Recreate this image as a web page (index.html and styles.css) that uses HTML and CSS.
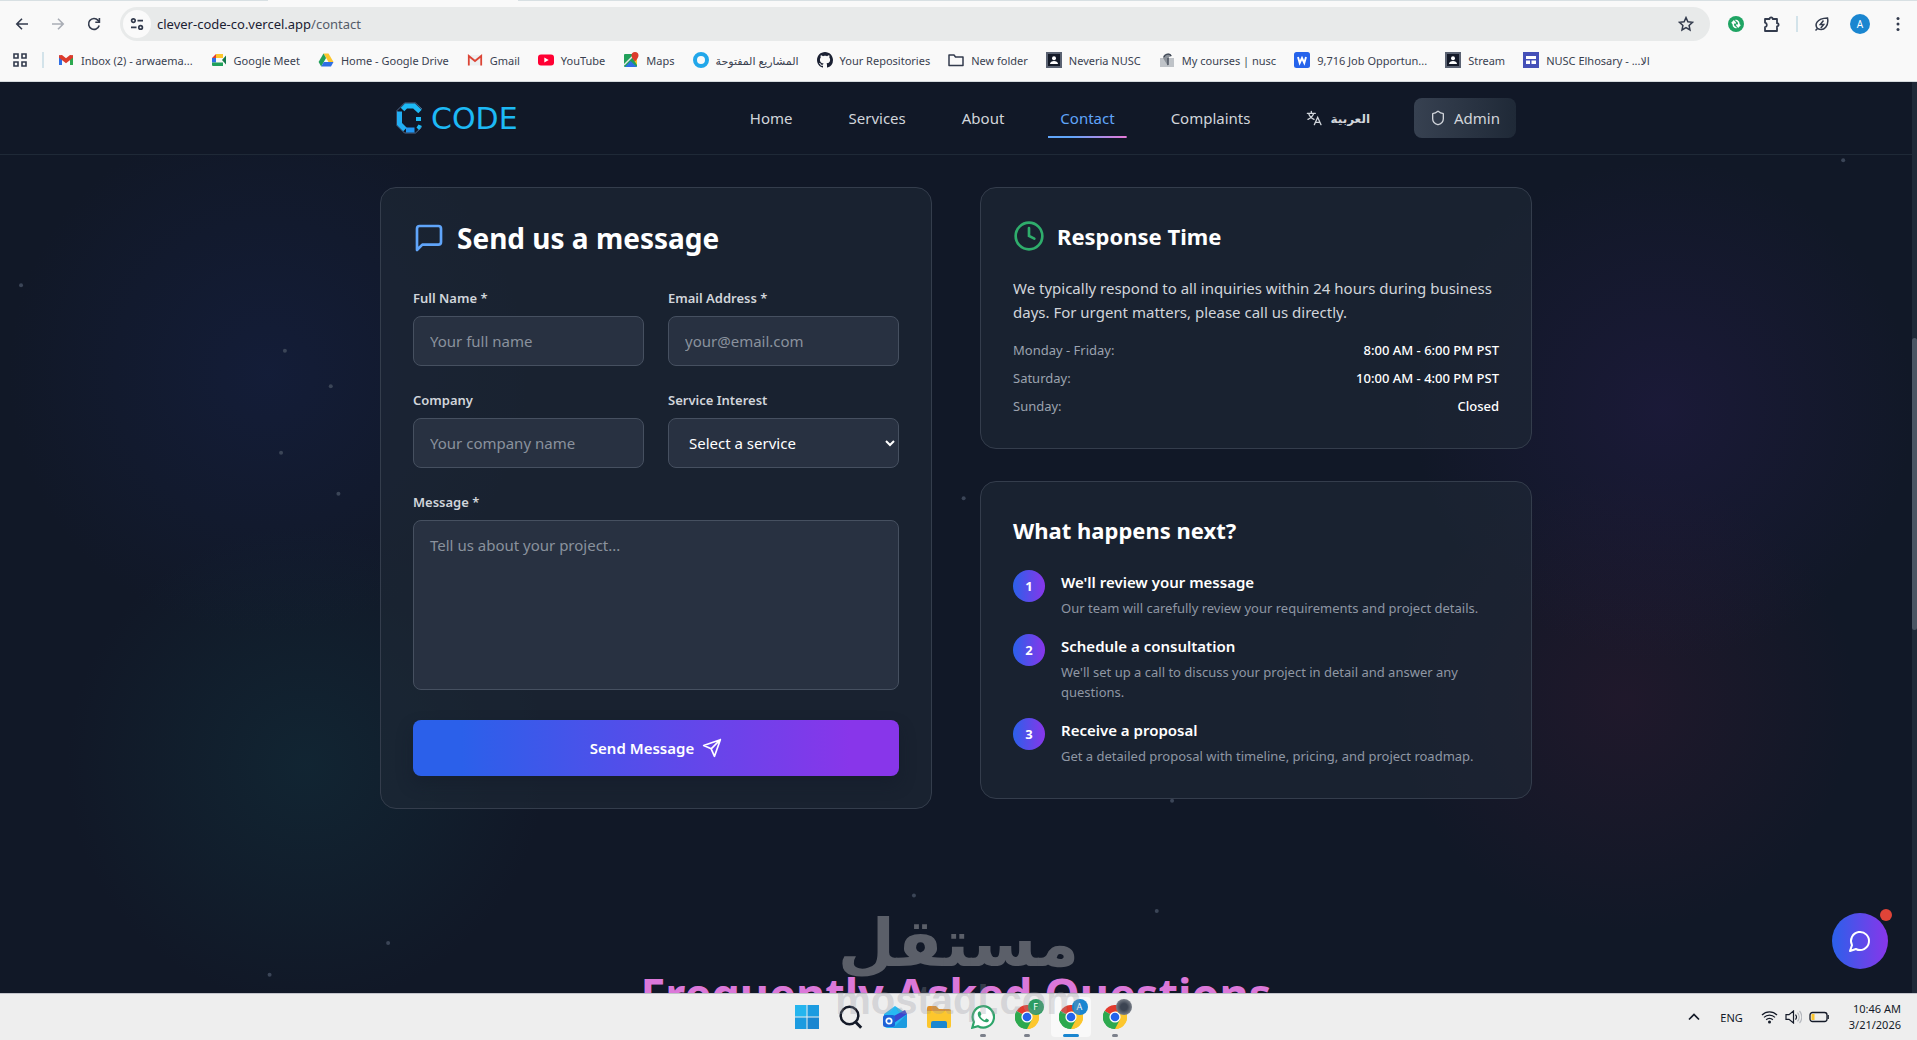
FILE: index.html
```
<!DOCTYPE html>
<html lang="en">
<head>
    <meta charset="UTF-8">
    <meta name="viewport" content="width=device-width, initial-scale=1.0">
    <title>Contact - Clever Code</title>
    <link rel="stylesheet" href="styles.css">
</head>
<body>

<!-- shared icons -->
<svg class="defs" width="0" height="0" aria-hidden="true">
    <symbol id="person" viewBox="0 0 16 16">
        <rect width="16" height="16" fill="#5a6272"/>
        <rect x="2" y="2" width="12" height="12" fill="#141a28"/>
        <circle cx="8" cy="6.3" r="2" fill="#fff"/>
        <path d="M4 12c0-2 2-3 4-3s4 1 4 3z" fill="#fff"/>
    </symbol>
    <symbol id="chrome" viewBox="0 0 24 24">
        <path d="M12 12 1.6 6A12 12 0 0 1 22.4 6z" fill="#e33b2e"/>
        <path d="M12 12 22.4 6A12 12 0 0 1 12 24z" fill="#fcc62d"/>
        <path d="M12 12v12A12 12 0 0 1 1.6 6z" fill="#2da94f"/>
        <path d="M12 6.5h10.7A12 12 0 0 1 12 24l4.8-9.2z" fill="#fcc62d"/>
        <path d="M7.2 14.8 1.6 6A12 12 0 0 0 12 24l4.8-9.2z" fill="#2da94f"/>
        <circle cx="12" cy="12" r="5.6" fill="#fff"/>
        <circle cx="12" cy="12" r="4.3" fill="#2563eb"/>
    </symbol>
</svg>

<div class="window">
    <div class="browser">
        <div class="tab-strip"><span></span><span></span></div>
        <div class="toolbar">
            <button class="tool" aria-label="Back"><svg width="16" height="16" viewBox="0 0 16 16" fill="none" stroke="#333b4d" stroke-width="1.6"><path d="M14 8H3M8 2.8 2.8 8 8 13.200"/></svg></button>
            <button class="tool" aria-label="Forward"><svg width="16" height="16" viewBox="0 0 16 16" fill="none" stroke="#a9adb5" stroke-width="1.6"><path d="M2 8h11M8 2.800 13.200 8 8 13.200"/></svg></button>
            <button class="tool" aria-label="Reload"><svg width="16" height="16" viewBox="0 0 16 16" fill="none" stroke="#333b4d" stroke-width="1.6"><path d="M13.2 9.500A5.400 5.400 0 1 1 12.100 4.400L13.200 5.600"/><path d="M13.400 2v4.200H9.300"/></svg></button>
            <div class="omnibox">
                <button class="site-info" aria-label="Site information"><svg width="14" height="14" viewBox="0 0 14 14" fill="none" stroke="#333b4d" stroke-width="1.7"><circle cx="3.4" cy="3.6" r="1.8"/><path d="M7.5 3.6H13M1 10.4h5.5"/><circle cx="10.6" cy="10.4" r="1.8"/></svg></button>
                <div class="url">clever-code-co.vercel.app<span>/contact</span></div>
                <button class="tool star" aria-label="Bookmark"><svg width="16" height="16" viewBox="0 0 16 16" fill="none" stroke="#333b4d" stroke-width="1.5"><path d="m8 1.6 1.9 4.2 4.6.5-3.4 3.1.9 4.6L8 11.7 4 14l.9-4.6L1.500 6.300l4.600-.5z"/></svg></button>
            </div>
            <div class="extensions">
                <button class="tool" aria-label="Extension"><svg width="16" height="16" viewBox="0 0 16 16"><circle cx="8" cy="8" r="8" fill="#1fa463"/><g fill="none" stroke="#fff" stroke-width="1.6"><path d="M8.500 11.800C5.500 11.500 4.600 9 5.600 6.500M3.800 7.400l2-2.200 1.800 2.300M7.500 4.200c3 .3 3.900 2.800 2.900 5.300M12.200 8.600l-2 2.200-1.800-2.300"/></g></svg></button>
                <button class="tool" aria-label="Extensions"><svg width="18" height="18" viewBox="0 0 18 18" fill="none" stroke="#333b4d" stroke-width="1.8" stroke-linejoin="round"><path d="M2 4h4.500a1.600 1.600 0 0 1 3.200 0H14v4.200a1.600 1.600 0 0 1 0 3.200V16H2v-3.800a2.300 2.300 0 0 0 0-4.500z"/></svg></button>
                <span class="divider"></span>
                <button class="tool" aria-label="Energy saver"><svg width="16" height="16" viewBox="0 0 16 16" fill="none" stroke="#333b4d" stroke-width="1.5"><path d="M1.500 14.500 3.500 12.500M3.500 12.500C.5 9 2 2.500 13.500 2 15 9 10.500 16 3.500 12.500z"/><path d="M9.500 4.500 6.300 8.400h3.400L6.800 12"/></svg></button>
                <button class="avatar" aria-label="Profile">A</button>
                <button class="tool menu" aria-label="Menu"><svg width="4" height="16" viewBox="0 0 4 16" fill="#333b4d"><circle cx="2" cy="2.500" r="1.500"/><circle cx="2" cy="8" r="1.500"/><circle cx="2" cy="13.500" r="1.500"/></svg></button>
            </div>
        </div>
        <nav class="bookmarks" aria-label="Bookmarks">
            <button class="tool" aria-label="Apps"><svg width="14" height="14" viewBox="0 0 14 14" fill="none" stroke="#333b4d" stroke-width="1.600"><path d="M1 1h4v4H1zM9 1h4v4H9zM1 9h4v4H1zM9 9h4v4H9z"/></svg></button>
            <span class="divider"></span>
            <a href="#"><svg viewBox="0 0 16 16"><path d="M1 3v10h3V6.500z" fill="#2f6fe4"/><path d="M15 3v10h-3V6.500z" fill="#2da94f"/><path d="M1 3.200 4 3l4 3.300L12 3l3 .2v2.600l-7 5.400-7-5.400z" fill="#dc3b2c"/></svg>Inbox (2) - arwaema...</a>
            <a href="#"><svg viewBox="0 0 16 16"><path d="M1 6l4-4v4z" fill="#e33b2e"/><path d="M5 2h7v4H5z" fill="#fcc62d"/><path d="M1 6h4v4.500H1z" fill="#2f6fe4"/><path d="M1 10.500h4V14H2a1 1 0 0 1-1-1zM5 10.500h7V14H5z" fill="#21a05a"/><path d="m11 8 4-4.500v9z" fill="#16794b"/></svg>Google Meet</a>
            <a href="#"><svg viewBox="0 0 16 16"><path d="M5.500 1.500h5l5 8.500h-5z" fill="#fcc62d"/><path d="m5.500 1.500 2.600 4.400L3.200 14.500.6 10z" fill="#21a05a"/><path d="M5.800 10h9.700L13 14.500H3.200z" fill="#2f6fe4"/></svg>Home - Google Drive</a>
            <a href="#"><svg viewBox="0 0 16 16"><path d="M1 3h14v10.500H1z" fill="#eef0f1"/><path d="M1.800 13.500V4L8 9l6.200-5v9.500" fill="none" stroke="#dc4536" stroke-width="1.800"/></svg>Gmail</a>
            <a href="#"><svg viewBox="0 0 16 16"><rect y="2.500" width="16" height="11" rx="3" fill="#ff0033"/><path d="m6.300 5.500 4.400 2.500-4.400 2.500z" fill="#fff"/></svg>YouTube</a>
            <a href="#"><svg viewBox="0 0 16 16"><rect x="1" y="2" width="13" height="13" rx="1" fill="#21a05a"/><path d="m2 15 5.500-6L14 15z" fill="#2f6fe4"/><path d="M1 13 11 3" stroke="#e8eaea" stroke-width="1.500"/><path d="M9 5 14 13V7z" fill="#fcc62d"/><path d="M12 0a3.500 3.500 0 0 1 3.500 3.500C15.500 6 12 9.500 12 9.500S8.500 6 8.500 3.500A3.500 3.500 0 0 1 12 0z" fill="#dc3b2c"/></svg>Maps</a>
            <a href="#"><svg viewBox="0 0 16 16"><circle cx="8" cy="8" r="6" fill="none" stroke="#22a7ea" stroke-width="4"/></svg><bdi lang="ar">المشاريع المفتوحة</bdi></a>
            <a href="#"><svg viewBox="0 0 16 16"><path fill="#1b2133" d="M8 0C3.580 0 0 3.580 0 8c0 3.540 2.290 6.530 5.470 7.590.4.070.55-.17.55-.38 0-.19-.01-.82-.01-1.490-2.010.37-2.530-.49-2.690-.94-.09-.23-.48-.94-.82-1.130-.28-.15-.68-.52-.01-.53.63-.01 1.080.58 1.230.82.72 1.210 1.870.87 2.330.66.07-.52.28-.87.51-1.070-1.780-.2-3.640-.89-3.640-3.950 0-.87.31-1.590.82-2.150-.08-.2-.36-1.020.08-2.120 0 0 .67-.21 2.200.82.64-.18 1.320-.27 2-.27s1.360.09 2 .27c1.530-1.040 2.200-.82 2.200-.82.44 1.100.16 1.920.08 2.120.51.56.82 1.270.82 2.150 0 3.070-1.870 3.750-3.650 3.950.29.25.54.73.54 1.480 0 1.070-.01 1.930-.01 2.200 0 .21.15.46.55.38A8.010 8.010 0 0 0 16 8c0-4.420-3.580-8-8-8z"/></svg>Your Repositories</a>
            <a href="#"><svg viewBox="0 0 16 16" fill="none" stroke="#333b4d" stroke-width="1.500"><path d="M1 3h5l1.500 2H15v8.500H1z" stroke-linejoin="round"/></svg>New folder</a>
            <a href="#"><svg><use href="#person"/></svg>Neveria NUSC</a>
            <a href="#"><svg viewBox="0 0 16 16"><path d="M1 6h14v9H1z" fill="#bfc3c8"/><path d="M4 6c0-5 7-6 9-2l-3 1-1 9" fill="#8b9199"/><path d="M5 5c1-3 6-4 7-1M9 6v7" stroke="#3c4452" stroke-width="1.200" fill="none"/></svg>My courses | nusc</a>
            <a href="#"><svg viewBox="0 0 16 16"><rect width="16" height="16" rx="2.500" fill="#2563eb"/><path d="m4 5 1.700 6L8 6l2.300 5L12 5" fill="none" stroke="#fff" stroke-width="1.900"/></svg>9,716 Job Opportun...</a>
            <a href="#"><svg><use href="#person"/></svg>Stream</a>
            <a href="#"><svg viewBox="0 0 16 16"><path d="M0 0h16v16H0z" fill="#4550b8"/><path d="M3 4h10v3H3zM3 8.500h4V12H3zM8.500 8.500H13V12H8.500z" fill="#fff"/></svg><span>NUSC Elhosary - ...<bdi lang="ar">الا</bdi></span></a>
        </nav>
    </div>

    <div class="viewport">
        <div class="page">
            <svg class="particles" width="100%" height="100%" fill="#3b4557" aria-hidden="true">
                <circle cx="1.100%" cy="22.300%" r="2"/>
                <circle cx="14.900%" cy="29.500%" r="2"/>
                <circle cx="17.300%" cy="33.400%" r="2"/>
                <circle cx="14.700%" cy="40.700%" r="2"/>
                <circle cx="17.700%" cy="45.200%" r="2"/>
                <circle cx="50.400%" cy="45.700%" r="2"/>
                <circle cx="61.300%" cy="78.900%" r="2"/>
                <circle cx="47.800%" cy="89.300%" r="2"/>
                <circle cx="60.500%" cy="91%" r="2"/>
                <circle cx="20.300%" cy="94.500%" r="2"/>
                <circle cx="14.100%" cy="98%" r="2"/>
                <circle cx="96.400%" cy="8.600%" r="2"/>
            </svg>

            <header class="site-header">
                <div class="container">
                    <a class="logo" href="#" aria-label="Clever Code">
                        <svg width="27" height="32" viewBox="0 0 27 32" fill="none">
                            <path d="M26 7 19.500 1H8.500L1 8.500v15L8.500 31h11l6-5.500" stroke="#51698c" stroke-width="1"/>
                            <path d="M24 9.500 18 4H10L6.500 7.500" stroke="#1db9f5" stroke-width="5"/>
                            <path d="M3.500 9.500v12.500l5.500 5.500" stroke="#22aef3" stroke-width="5"/>
                            <path d="M10 28h8.500" stroke="#2196f3" stroke-width="5"/>
                            <path d="M20 15h5v4h-5zM20.500 25.500l2-3 3.500 1.500-3 4z" fill="#1db9f5"/>
                        </svg>
                        <span>CODE</span>
                    </a>
                    <nav class="menu-links">
                        <a href="#">Home</a>
                        <a href="#">Services</a>
                        <a href="#">About</a>
                        <a href="#" class="active">Contact</a>
                        <a href="#">Complaints</a>
                        <button class="lang">
                            <svg width="16" height="16" viewBox="0 0 24 24" fill="none" stroke="currentColor" stroke-width="2" stroke-linecap="round"><path d="M2 5h12M8 2v3M4 5c1 4 4 7 8 9M11.500 5C10.500 9 7 12 3 14M12.500 22l5-11 5 11M14.200 18.500h6.600"/></svg>
                            <bdi lang="ar">العربية</bdi>
                        </button>
                        <button class="admin">
                            <svg width="16" height="16" viewBox="0 0 24 24" fill="none" stroke="currentColor" stroke-width="2" stroke-linejoin="round"><path d="M20 13c0 5-3.500 7.500-7.660 8.950a1 1 0 0 1-.67-.01C7.500 20.500 4 18 4 13V6a1 1 0 0 1 1-1c2 0 4.500-1.200 6.240-2.720a1.170 1.170 0 0 1 1.520 0C14.510 3.810 17 5 19 5a1 1 0 0 1 1 1z"/></svg>
                            Admin
                        </button>
                    </nav>
                </div>
            </header>

            <main class="contact">
                <section class="card form-card">
                    <h2>
                        <svg width="32" height="32" viewBox="0 0 24 24" fill="none" stroke="#60a5fa" stroke-width="2" stroke-linejoin="round"><path d="M21 15a2 2 0 0 1-2 2H7l-4 4V5a2 2 0 0 1 2-2h14a2 2 0 0 1 2 2z"/></svg>
                        Send us a message
                    </h2>
                    <form>
                        <div class="fields">
                            <div class="field">
                                <label for="name">Full Name *</label>
                                <input id="name" type="text" placeholder="Your full name">
                            </div>
                            <div class="field">
                                <label for="email">Email Address *</label>
                                <input id="email" type="email" placeholder="your@email.com">
                            </div>
                            <div class="field">
                                <label for="company">Company</label>
                                <input id="company" type="text" placeholder="Your company name">
                            </div>
                            <div class="field">
                                <label for="service">Service Interest</label>
                                <select id="service">
                                    <option>Select a service</option>
                                </select>
                            </div>
                        </div>
                        <div class="field">
                            <label for="message">Message *</label>
                            <textarea id="message" placeholder="Tell us about your project..."></textarea>
                        </div>
                        <button type="button" class="send">
                            Send Message
                            <svg width="20" height="20" viewBox="0 0 24 24" fill="none" stroke="currentColor" stroke-width="2" stroke-linejoin="round" stroke-linecap="round"><path d="M22 2 15 22l-4-9-9-4zM22 2 11 13"/></svg>
                        </button>
                    </form>
                </section>

                <div class="side">
                    <section class="card">
                        <h3>
                            <svg width="32" height="32" viewBox="0 0 24 24" fill="none" stroke="#2fae6c" stroke-width="2" stroke-linecap="round"><circle cx="12" cy="12" r="10"/><path d="M12 6v6l4 2"/></svg>
                            Response Time
                        </h3>
                        <p class="intro">We typically respond to all inquiries within 24 hours during business days. For urgent matters, please call us directly.</p>
                        <dl class="hours">
                            <div><dt>Monday - Friday:</dt><dd>8:00 AM - 6:00 PM PST</dd></div>
                            <div><dt>Saturday:</dt><dd>10:00 AM - 4:00 PM PST</dd></div>
                            <div><dt>Sunday:</dt><dd>Closed</dd></div>
                        </dl>
                    </section>
                    <section class="card">
                        <h3>What happens next?</h3>
                        <ol class="steps">
                            <li>
                                <span class="num">1</span>
                                <div>
                                    <h4>We'll review your message</h4>
                                    <p>Our team will carefully review your requirements and project details.</p>
                                </div>
                            </li>
                            <li>
                                <span class="num">2</span>
                                <div>
                                    <h4>Schedule a consultation</h4>
                                    <p>We'll set up a call to discuss your project in detail and answer any questions.</p>
                                </div>
                            </li>
                            <li>
                                <span class="num">3</span>
                                <div>
                                    <h4>Receive a proposal</h4>
                                    <p>Get a detailed proposal with timeline, pricing, and project roadmap.</p>
                                </div>
                            </li>
                        </ol>
                    </section>
                </div>
            </main>

            <h2 class="faq-title">Frequently Asked Questions</h2>

            <button class="chat" aria-label="Open chat">
                <svg width="24" height="24" viewBox="0 0 24 24" fill="none" stroke="#fff" stroke-width="2" stroke-linejoin="round"><path d="M7.900 20A9 9 0 1 0 4 16.100L2 22z"/></svg>
                <span></span>
            </button>
        </div>
        <div class="scrollbar"><span></span></div>
    </div>

    <footer class="taskbar">
        <div class="apps">
            <button aria-label="Start"><svg viewBox="0 0 24 24"><path d="M0 0h11.500v11.500H0z" fill="#25b5ee"/><path d="M12.500 0H24v11.500H12.500zM0 12.500h11.500V24H0z" fill="#1c9be0"/><path d="M12.500 12.500H24V24H12.500z" fill="#1a86d0"/></svg></button>
            <button aria-label="Search"><svg viewBox="0 0 24 24" fill="none" stroke="#141a28" stroke-width="2.500"><circle cx="10.500" cy="10.500" r="8.800"/><path d="m16.800 17.300 5.400 5.400" stroke-width="3"/></svg></button>
            <button aria-label="Outlook"><svg viewBox="0 0 24 24"><path d="M1 9 12 1l12 8v12a2 2 0 0 1-2 2H5a4 4 0 0 1-4-4z" fill="#27b9f2"/><path d="M24 9v12a2 2 0 0 1-2 2H10z" fill="#1c9be0"/><path d="m9 12 13-7 2 4-13 9z" fill="#3b46cf"/><rect y="10" width="12" height="12" rx="2.500" fill="#1d62d8"/><circle cx="6" cy="16" r="2.700" fill="none" stroke="#fff" stroke-width="1.700"/></svg></button>
            <button aria-label="File Explorer"><svg viewBox="0 0 24 24"><path d="M0 3a2 2 0 0 1 2-2h7l3 3h10a2 2 0 0 1 2 2v6H0z" fill="#e0912b"/><path d="M0 6h24v15a2 2 0 0 1-2 2H2a2 2 0 0 1-2-2z" fill="#fcc62d"/><path d="M4 23v-5a2 2 0 0 1 2-2h12a2 2 0 0 1 2 2v5z" fill="#1a86d0"/></svg></button>
            <button aria-label="WhatsApp" class="open"><svg viewBox="0 0 24 24"><path d="M1.300 22.700 2.900 17A10.700 10.700 0 1 1 7 21.200z" fill="#fff" stroke="#2da56a" stroke-width="2.200"/><path d="M8.500 6.300c-2.800 1-2 5 1 8s7 4.200 8.300 1.700c.5-1-.3-1.500-2.600-2.500l-1.400 1.700c-2-.7-3.700-2.300-4.500-4.300l1.100-1.500c-.5-2-1-3-1.900-3.100z" fill="#2da56a"/></svg></button>
            <button aria-label="Chrome profile F" class="open"><svg><use href="#chrome"/></svg><span class="badge green">F</span></button>
            <button aria-label="Chrome profile A" class="open current"><svg><use href="#chrome"/></svg><span class="badge">A</span></button>
            <button aria-label="Chrome" class="open"><svg><use href="#chrome"/></svg><span class="badge photo"></span></button>
        </div>
        <div class="tray">
            <svg width="12" height="8" viewBox="0 0 12 8" fill="none" stroke="#141a28" stroke-width="1.700"><path d="m1 6.500 5-5 5 5"/></svg>
            <span class="input-lang">ENG</span>
            <div class="status">
                <svg width="17" height="14" viewBox="0 0 17 14" fill="none" stroke="#141a28" stroke-width="1.300"><path d="M1 5a10.500 10.500 0 0 1 15 0M3 7.400a7.600 7.600 0 0 1 11 0M5.200 9.700a4.600 4.600 0 0 1 6.600 0"/><circle cx="8.500" cy="12" r="1.500" fill="#141a28" stroke="none"/></svg>
                <svg width="17" height="14" viewBox="0 0 17 14" fill="none" stroke="#141a28" stroke-width="1.200"><path d="M1 4.700h3L8.500 1v12L4 9.300H1z"/><path d="M10.500 4.500a4 4 0 0 1 0 5"/><path d="M12.500 2.700a6.500 6.500 0 0 1 0 8.600M14.500 1a9 9 0 0 1 0 12" stroke="#b5b8be"/></svg>
                <svg width="20" height="12" viewBox="0 0 20 12" fill="none" stroke="#141a28" stroke-width="1.300"><rect x="1" y="1.500" width="17" height="9" rx="2.500"/><path d="M19.200 4v4"/><path d="M2.500 3h3v6h-3z" fill="#fcc62d" stroke="none"/></svg>
            </div>
            <div class="clock"><span>10:46 AM</span><span>3/21/2026</span></div>
        </div>
    </footer>

    <div class="watermark" aria-hidden="true">
        <span class="ar" lang="ar">مستقل</span>
        <span class="en">mostaql.com</span>
    </div>
</div>

</body>
</html>
```
FILE: styles.css
```
* {
    box-sizing: border-box;
}
body {
    margin: 0;
    font-family: "Noto Sans", "DejaVu Sans", sans-serif;
    background-color: #111827;
    overflow: hidden;
}
button, input, select, textarea {
    font-family: inherit;
}
button {
    cursor: pointer;
}
a {
    text-decoration: none;
}
h2, h3, h4, p, dl, dd, ol {
    margin: 0;
    padding: 0;
}
.defs {
    position: absolute;
}
.window {
    position: relative;
    display: flex;
    flex-direction: column;
    height: 100vh;
}

/* browser chrome */
.browser {
    background-color: #f9f9f9;
    border-bottom: 1px solid #d5dadd;
}
.tab-strip {
    display: flex;
    justify-content: space-between;
    height: 1px;
}
.tab-strip span {
    width: 14%;
    background-color: #d8e0e3;
}
.tab-strip span + span {
    width: 73%;
}
.toolbar {
    display: flex;
    align-items: center;
    gap: 12px;
    padding: 6px 7px 0 10px;
}
.tool {
    display: flex;
    align-items: center;
    justify-content: center;
    width: 24px;
    height: 24px;
    padding: 0;
    border: none;
    background: none;
}
.omnibox {
    display: flex;
    flex: 1;
    align-items: center;
    gap: 6px;
    height: 34px;
    margin-left: 2px;
    padding: 0 12px 0 3px;
    border-radius: 17px;
    background-color: #e8eaea;
}
.site-info {
    display: flex;
    align-items: center;
    justify-content: center;
    width: 28px;
    height: 28px;
    padding: 0;
    border: none;
    border-radius: 50%;
    background-color: #fafafa;
}
.url {
    flex: 1;
    font-size: 13px;
    color: #1b2133;
}
.url span {
    color: #555c69;
}
.extensions {
    display: flex;
    align-items: center;
    gap: 12px;
    margin-left: 2px;
}
.divider {
    width: 2px;
    height: 16px;
    background-color: #d3e3ea;
}
.avatar {
    width: 20px;
    height: 20px;
    margin: 0 4px;
    padding: 0;
    border: none;
    border-radius: 50%;
    background-color: #1a86d0;
    color: white;
    font-size: 10px;
}
.bookmarks {
    display: flex;
    align-items: center;
    gap: 18px;
    height: 40px;
    padding: 0 0 2px 8px;
}
.bookmarks .divider {
    margin: 0 -4px 0 -8px;
}
.bookmarks a {
    display: flex;
    align-items: center;
    gap: 7px;
    font-size: 11px;
    color: #3a4150;
    white-space: nowrap;
}
.bookmarks svg {
    flex-shrink: 0;
}
.bookmarks a svg {
    width: 16px;
    height: 16px;
}

/* page */
.viewport {
    display: flex;
    flex: 1;
    min-height: 0;
}
.page {
    position: relative;
    flex: 1;
    overflow: hidden;
    background:
        radial-gradient(circle at 14% 32%, rgba(25, 40, 95, 0.3), transparent 260px),
        radial-gradient(circle at 16% 75%, rgba(18, 70, 80, 0.28), transparent 240px),
        radial-gradient(circle at 87% 36%, rgba(55, 30, 105, 0.25), transparent 250px),
        radial-gradient(circle at 85% 68%, rgba(75, 25, 55, 0.25), transparent 230px),
        #111827;
}
.particles {
    position: absolute;
    inset: 0;
}
.site-header {
    position: relative;
    background-color: #111827;
    border-bottom: 1px solid #1f2937;
}
.site-header .container {
    display: flex;
    align-items: center;
    justify-content: space-between;
    max-width: 1152px;
    height: 72px;
    margin: 0 auto;
    padding: 0 16px;
}
.logo {
    display: flex;
    align-items: center;
    gap: 8px;
    color: #1db9f5;
    font-family: "DejaVu Sans", sans-serif;
    font-size: 30px;
}
.menu-links {
    display: flex;
    align-items: center;
    gap: 32px;
    font-size: 15px;
}
.menu-links a {
    padding: 8px 12px;
    line-height: 24px;
    color: #d1d5db;
}
.menu-links .active {
    color: #60a5fa;
    background: linear-gradient(90deg, #60a5fa 30%, #e879d8) bottom / 100% 2px no-repeat;
}
.lang {
    display: flex;
    align-items: center;
    gap: 8px;
    padding: 8px 12px;
    border: none;
    background: none;
    color: #d1d5db;
    font-size: 12px;
    font-weight: 600;
}
.admin {
    display: flex;
    align-items: center;
    gap: 8px;
    height: 40px;
    padding: 0 16px;
    border: none;
    border-radius: 8px;
    background: linear-gradient(90deg, #374151, #1f2937);
    color: #d1d5db;
    font-size: 15px;
}
.contact {
    position: relative;
    display: grid;
    grid-template-columns: 1fr 1fr;
    align-items: start;
    gap: 48px;
    max-width: 1152px;
    margin: 0 auto;
    padding-top: 32px;
}
.side {
    display: grid;
    gap: 32px;
}
.card {
    padding: 32px;
    border: 1px solid #343d4c;
    border-radius: 16px;
    background-color: rgba(31, 41, 55, 0.6);
}
.card h2, .card h3 {
    display: flex;
    align-items: center;
    gap: 12px;
    color: white;
    line-height: 36px;
}
.card h2 {
    margin-bottom: 32px;
    font-size: 28px;
}
.card h3 {
    margin-bottom: 24px;
    font-size: 22px;
    line-height: 32px;
}
.fields {
    display: grid;
    grid-template-columns: 1fr 1fr;
    gap: 24px;
    margin-bottom: 24px;
}
.field label {
    display: block;
    margin-bottom: 8px;
    font-size: 13px;
    font-weight: 600;
    line-height: 20px;
    color: #d1d5db;
}
.field input, .field select, .field textarea {
    display: block;
    width: 100%;
    height: 50px;
    padding: 12px 16px;
    border: 1px solid #465060;
    border-radius: 8px;
    background-color: #283141;
    color: white;
    font-size: 15px;
    line-height: 24px;
}
.field select {
    padding-right: 0;
}
.field textarea {
    height: 170px;
    resize: none;
}
.field ::placeholder {
    color: #8a919d;
}
.send {
    display: flex;
    align-items: center;
    justify-content: center;
    gap: 8px;
    width: 100%;
    height: 56px;
    margin-top: 30px;
    border: none;
    border-radius: 8px;
    background: linear-gradient(90deg, #2b60ea 10%, #8836ea 90%);
    box-shadow: 0 8px 16px rgba(17, 24, 39, 0.4);
    color: white;
    font-size: 15px;
    font-weight: 600;
}
.intro {
    color: #d1d5db;
    font-size: 15px;
    line-height: 24px;
}
.hours {
    display: grid;
    gap: 8px;
    margin-top: 16px;
    font-size: 13px;
    line-height: 20px;
}
.hours div {
    display: flex;
    justify-content: space-between;
}
.hours dt {
    color: #9ca3af;
}
.hours dd {
    color: white;
    font-weight: 500;
}
.steps {
    display: grid;
    gap: 16px;
    list-style: none;
}
.steps li {
    display: flex;
    gap: 16px;
}
.num {
    display: flex;
    flex-shrink: 0;
    align-items: center;
    justify-content: center;
    width: 32px;
    height: 32px;
    border-radius: 50%;
    background: linear-gradient(90deg, #2b60ea, #8836ea);
    color: white;
    font-size: 13px;
    font-weight: 700;
}
.steps h4 {
    margin-bottom: 4px;
    color: white;
    font-size: 15px;
    font-weight: 600;
    line-height: 24px;
}
.steps p {
    color: #8f97a4;
    font-size: 13px;
    line-height: 20px;
}
.faq-title {
    position: relative;
    margin-top: 161px;
    color: #db78d9;
    font-size: 45px;
    line-height: 48px;
    text-align: center;
}
.chat {
    position: absolute;
    right: 24px;
    bottom: 24px;
    display: flex;
    align-items: center;
    justify-content: center;
    width: 56px;
    height: 56px;
    border: none;
    border-radius: 50%;
    background: linear-gradient(90deg, #2b60ea, #8836ea);
}
.chat span {
    position: absolute;
    top: -4px;
    right: -4px;
    width: 12px;
    height: 12px;
    border-radius: 50%;
    background-color: #e04438;
}
.scrollbar {
    width: 5px;
    background-color: #1f2937;
}
.scrollbar span {
    display: block;
    height: 32%;
    margin-top: 256px;
    border-radius: 3px;
    background-color: #4b5563;
}

/* taskbar */
.taskbar {
    display: grid;
    grid-template-columns: 1fr auto 1fr;
    align-items: center;
    height: 47px;
    padding-left: 4px;
    border-top: 1px solid #c3c4cb;
    background-color: #eeeeee;
}
.apps {
    display: flex;
    grid-column: 2;
    gap: 4px;
}
.apps button {
    position: relative;
    display: flex;
    align-items: center;
    justify-content: center;
    width: 40px;
    height: 40px;
    padding: 0;
    border: none;
    border-radius: 4px;
    background: none;
}
.apps svg {
    width: 24px;
    height: 24px;
}
.apps .current {
    background-color: #f9f9f9;
}
.apps .open::after {
    content: "";
    position: absolute;
    bottom: 0;
    width: 6px;
    height: 3px;
    border-radius: 2px;
    background-color: #7b808b;
}
.apps .current::after {
    width: 16px;
    background-color: #1a86d0;
}
.badge {
    position: absolute;
    top: 2px;
    right: 3px;
    width: 16px;
    height: 16px;
    border-radius: 50%;
    background-color: #1a86d0;
    color: white;
    font-size: 9px;
    line-height: 16px;
}
.badge.green {
    background-color: #2b9c62;
}
.badge.photo {
    background: radial-gradient(circle, #3c4452 30%, #a5a9b0);
}
.tray {
    display: flex;
    grid-column: 3;
    align-items: center;
    justify-content: flex-end;
    padding-right: 16px;
    color: #141a28;
    font-size: 11px;
}
.input-lang {
    margin: 0 18px 0 20px;
}
.status {
    display: flex;
    align-items: center;
    gap: 7px;
}
.clock {
    display: flex;
    flex-direction: column;
    margin-left: 20px;
    line-height: 16px;
    text-align: right;
}

/* watermark over everything */
.watermark {
    position: absolute;
    bottom: 20px;
    left: 50%;
    display: flex;
    flex-direction: column;
    align-items: center;
    transform: translateX(-50%);
    font-weight: 700;
    pointer-events: none;
}
.watermark .ar {
    color: #5b5f69;
    font-family: "DejaVu Sans", sans-serif;
    font-size: 66px;
    line-height: 72px;
}
.watermark .en {
    color: rgba(150, 152, 160, 0.3);
    font-family: "Liberation Sans", sans-serif;
    font-size: 40px;
    line-height: 40px;
}
```
